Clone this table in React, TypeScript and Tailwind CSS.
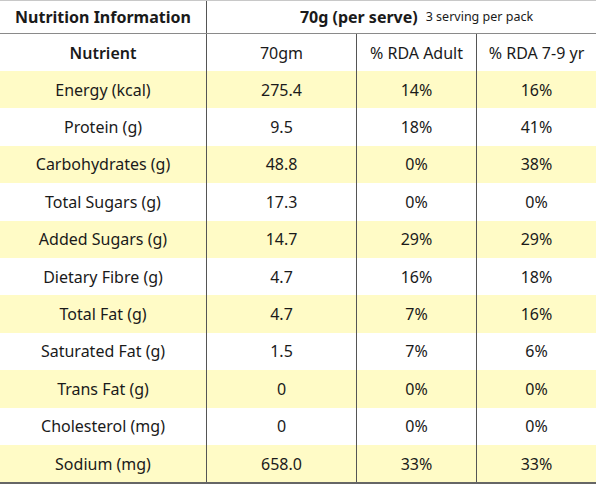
import React from 'react';

const rows: [string, string, string, string][] = [
  ['Energy (kcal)', '275.4', '14%', '16%'],
  ['Protein (g)', '9.5', '18%', '41%'],
  ['Carbohydrates (g)', '48.8', '0%', '38%'],
  ['Total Sugars (g)', '17.3', '0%', '0%'],
  ['Added Sugars (g)', '14.7', '29%', '29%'],
  ['Dietary Fibre (g)', '4.7', '16%', '18%'],
  ['Total Fat (g)', '4.7', '7%', '16%'],
  ['Saturated Fat (g)', '1.5', '7%', '6%'],
  ['Trans Fat (g)', '0', '0%', '0%'],
  ['Cholesterol (mg)', '0', '0%', '0%'],
  ['Sodium (mg)', '658.0', '33%', '33%'],
];

export default function App() {
  return (
    <div className="w-[600px] h-[484px] bg-white text-[#1a1a1a] font-['Noto_Sans','Liberation_Sans',sans-serif] text-[16px]">
      <div className="w-[596px]">
        {/* top header */}
        <div className="flex h-[34px] border-t border-[#c8c8c8] border-b border-b-[#8a8a8a]">
          <div className="w-[207px] flex items-center justify-center font-bold border-r border-[#555]">
            Nutrition Information
          </div>
          <div className="flex-1 flex items-center justify-center gap-[8px] pl-[30px]">
            <span className="font-bold">70g (per serve)</span>
            <span className="text-[12.5px]">3 serving per pack</span>
          </div>
        </div>
        {/* column header */}
        <div className="flex h-[37px]">
          <div className="w-[207px] flex items-center justify-center font-semibold border-r border-[#555]">Nutrient</div>
          <div className="w-[150px] flex items-center justify-center border-r border-[#555]">70gm</div>
          <div className="w-[120px] flex items-center justify-center border-r border-[#555]">% RDA Adult</div>
          <div className="flex-1 flex items-center justify-center">% RDA 7-9 yr</div>
        </div>
        {/* body */}
        <div className="border-b-2 border-[#666]">
          {rows.map((r, i) => (
            <div key={r[0]} className={`flex h-[37.4px] ${i % 2 === 0 ? 'bg-[#fffbc6]' : 'bg-white'}`}>
              <div className="w-[207px] flex items-center justify-center border-r border-[#555]">{r[0]}</div>
              <div className="w-[150px] flex items-center justify-center border-r border-[#555]">{r[1]}</div>
              <div className="w-[120px] flex items-center justify-center border-r border-[#555]">{r[2]}</div>
              <div className="flex-1 flex items-center justify-center">{r[3]}</div>
            </div>
          ))}
        </div>
      </div>
    </div>
  );
}
